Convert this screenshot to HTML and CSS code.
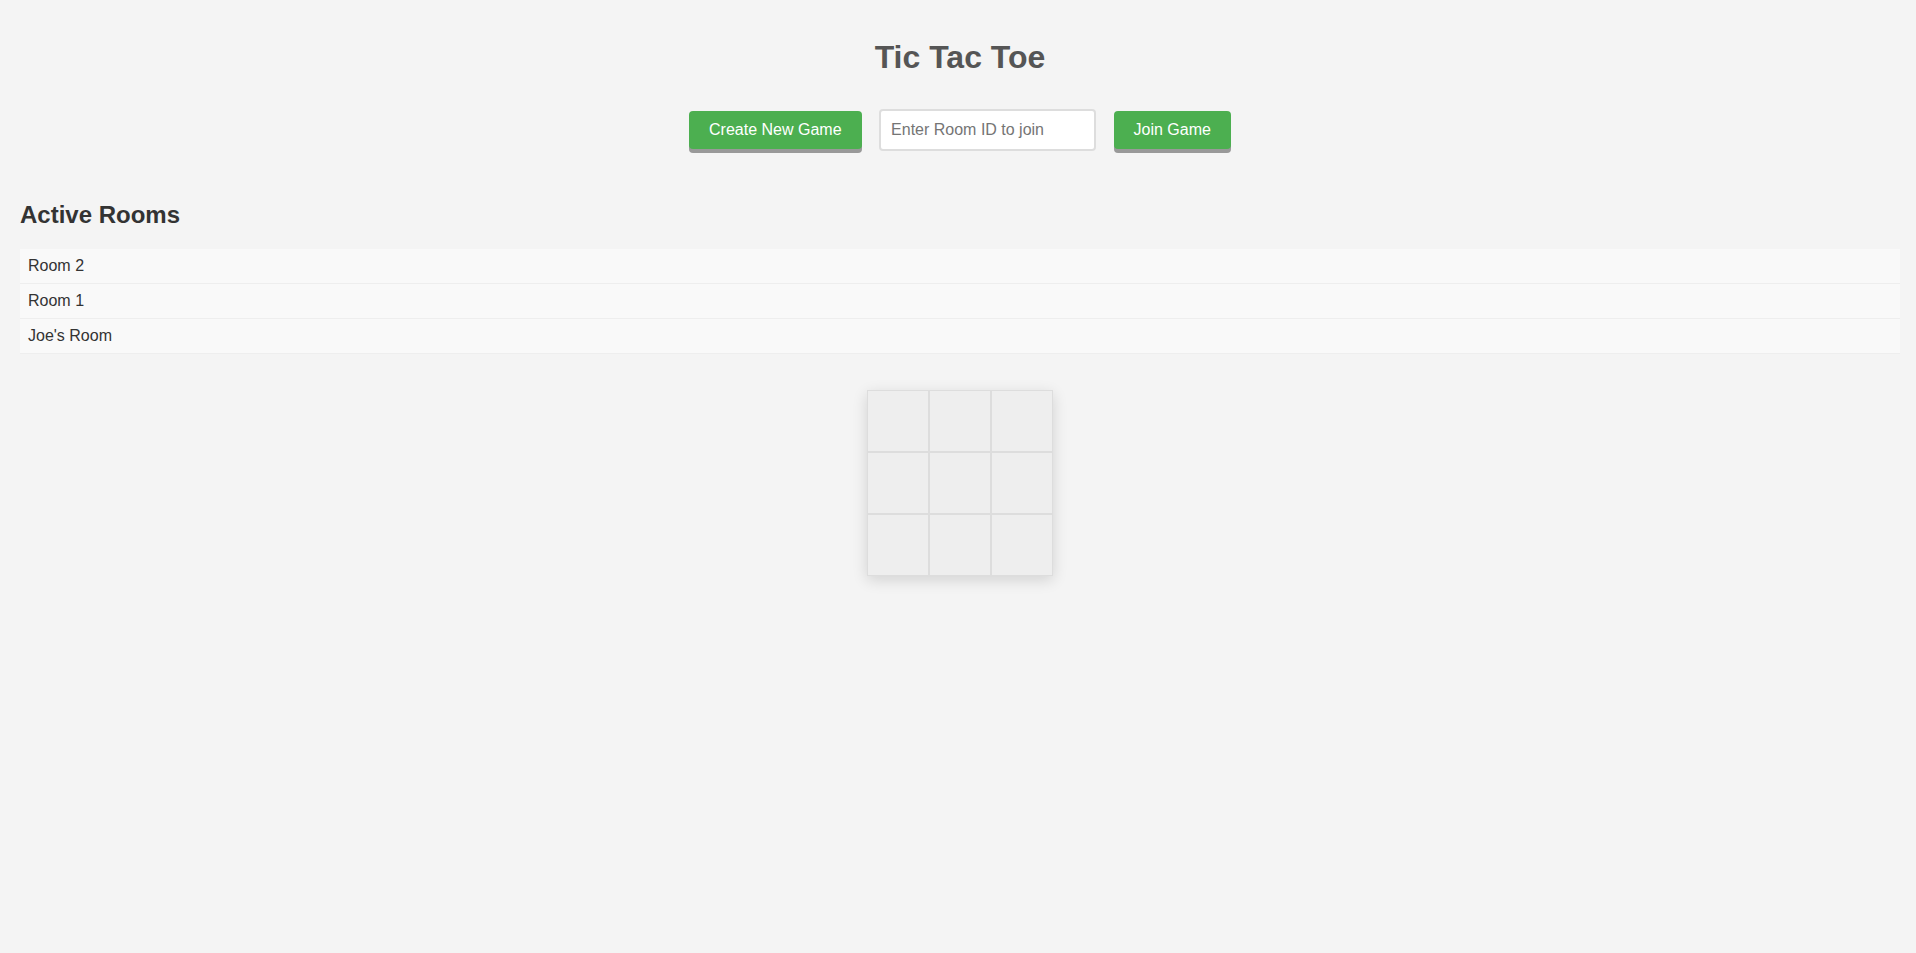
FILE: index.html
```html
<!DOCTYPE html>
<html lang="en">
<head>
<meta charset="utf-8">
<title>Tic Tac Toe</title>
<link rel="stylesheet" href="styles.css">
</head>
<body>
  <main class="page">
    <h1 class="title">Tic Tac Toe</h1>
    <div class="controls">
      <button class="btn">Create New Game</button>
      <input class="room-input" type="text" placeholder="Enter Room ID to join">
      <button class="btn">Join Game</button>
    </div>
    <h2 class="rooms-title">Active Rooms</h2>
    <ul class="rooms">
      <li class="room">Room 2</li>
      <li class="room">Room 1</li>
      <li class="room">Joe's Room</li>
    </ul>
    <div class="board">
      <div class="cell"></div><div class="cell"></div><div class="cell"></div>
      <div class="cell"></div><div class="cell"></div><div class="cell"></div>
      <div class="cell"></div><div class="cell"></div><div class="cell"></div>
    </div>
  </main>
</body>
</html>
```

FILE: styles.css
```css
html, body {
  margin: 0;
  background: #f4f4f4;
}

body {
  font-family: "Liberation Sans", Arial, sans-serif;
  color: #333;
}

.page {
  display: flex;
  flex-direction: column;
  padding: 20px 16px 20px 20px;
}

.title {
  font-size: 32px;
  font-weight: bold;
  color: #555;
  text-align: center;
  margin: 19px 0 33px;
}

.controls {
  display: flex;
  justify-content: center;
  align-items: center;
  gap: 17.5px;
  margin-bottom: 30px;
}

.btn {
  font-family: "Liberation Sans", Arial, sans-serif;
  font-size: 16px;
  background: #4caf50;
  color: #fff;
  border: none;
  border-radius: 4px;
  padding: 10px 20px;
  box-shadow: 0 4px 0 #999;
  cursor: pointer;
}

.room-input {
  font-family: "Liberation Sans", Arial, sans-serif;
  font-size: 16px;
  width: 217px;
  box-sizing: border-box;
  padding: 10px;
  border: 2px solid #ddd;
  border-radius: 4px;
  background: #fff;
  color: #333;
  outline: none;
}

.room-input::placeholder {
  color: #757575;
}

.rooms-title {
  font-size: 24px;
  font-weight: bold;
  color: #333;
  margin: 20px 0;
}

.rooms {
  list-style: none;
  padding: 0;
  margin: 0 0 36px;
}

.room {
  font-size: 16px;
  padding: 8px;
  background: #f9f9f9;
  border-bottom: 1px solid #eee;
  color: #333;
}

.board {
  align-self: center;
  display: grid;
  grid-template-columns: repeat(3, 62px);
  grid-template-rows: repeat(3, 62px);
  box-shadow: 0 4px 14px rgba(0, 0, 0, 0.14);
}

.cell {
  background: #eee;
  border: 1px solid #ddd;
}
```
